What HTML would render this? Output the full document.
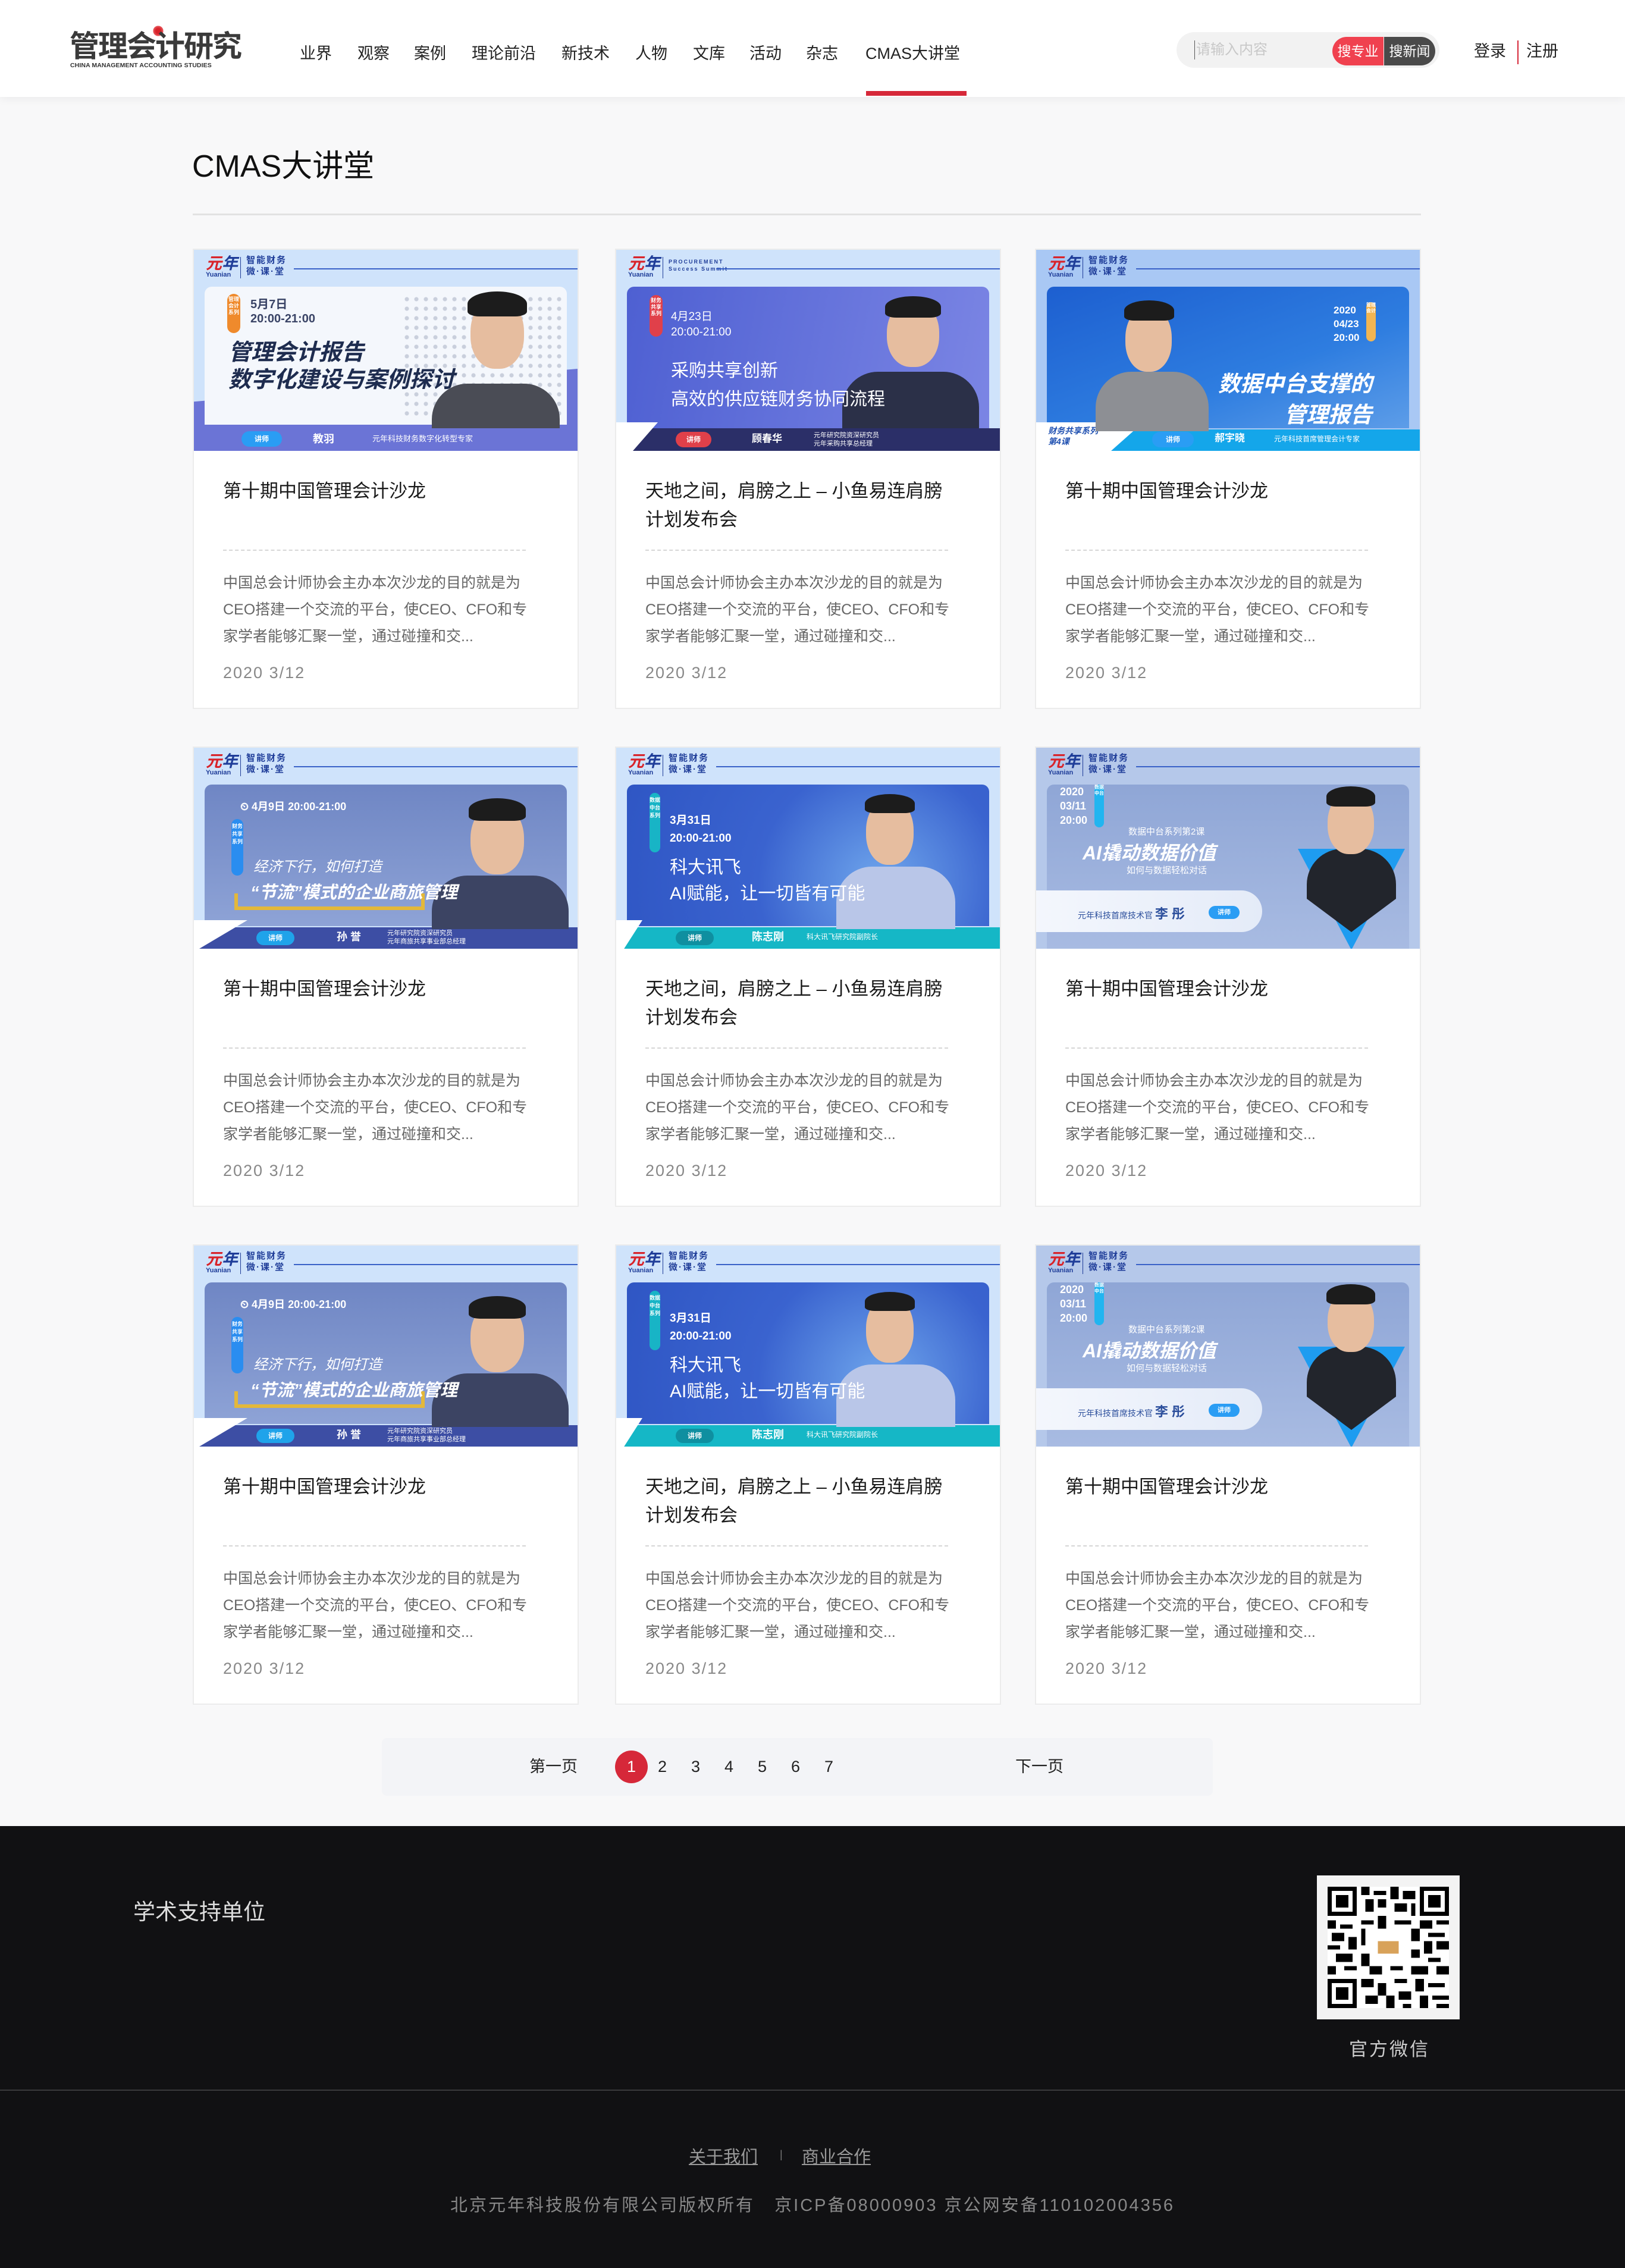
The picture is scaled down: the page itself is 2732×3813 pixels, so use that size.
<!DOCTYPE html>
<html><head><meta charset="utf-8">
<style>
*{margin:0;padding:0;box-sizing:border-box}
body{width:2732px;height:3813px;background:#f8f8f9;font-family:"Liberation Sans","Noto Sans CJK SC",sans-serif;position:relative;overflow:hidden;color:#222}
.abs{position:absolute}
.tx{z-index:3}
#hdr{position:absolute;left:0;top:0;width:2732px;height:163px;background:#fff;box-shadow:0 4px 14px rgba(0,0,0,.05)}
.nav{position:absolute;top:70px;font-size:27px;color:#222;line-height:40px}
.card{position:absolute;width:649px;height:774px;background:#fff;border:2px solid #ececec}
.ct{position:absolute;left:49px;top:382px;width:520px;font-size:31px;line-height:48px;color:#1a1a1a}
.cl{position:absolute;left:49px;top:504px;width:509px;border-top:2px dashed #d6d6d6}
.cd{position:absolute;left:49px;top:538px;width:530px;font-size:25px;line-height:45px;color:#666}
.cdt{position:absolute;left:49px;top:696px;font-size:27px;color:#888;letter-spacing:2px}
.bn{position:absolute;left:0;top:0;width:645px;height:338px;overflow:hidden}
.tp{position:absolute;left:0;top:0;width:100%;height:60px}
.yl{position:absolute;left:20px;top:8px;font-size:27px;font-weight:bold;color:#1f3d99;font-style:italic;line-height:30px}
.yl i{color:#d8232a;font-style:italic}
.ys{position:absolute;left:20px;top:36px;font-size:11px;color:#1f3d99;font-weight:bold}
.yd{position:absolute;left:78px;top:12px;height:36px;border-left:1px solid #1f3d99}
.yz{position:absolute;left:88px;top:8px;font-size:15px;line-height:19px;font-weight:bold;color:#1f3d99;letter-spacing:2px}
.yline{position:absolute;left:168px;top:31px;right:0;border-top:2px solid #3a62c8}
.pn{position:absolute;left:18px;top:62px;right:18px;bottom:38px;border-radius:12px 12px 0 0}
.bar{position:absolute;left:0;bottom:0;width:100%;height:40px}
.hl{position:absolute;font-weight:bold;font-style:italic;color:#fff;z-index:3}
.head{position:absolute;border-radius:48% 48% 45% 45%;background:#e6bd9f}
.hair{position:absolute;border-radius:50% 50% 20% 20%;background:#1c1c1c}
.body{position:absolute;border-radius:60px 60px 0 0}
.tag{position:absolute;border-radius:14px;font-size:14px;color:#fff;font-weight:bold;text-align:center;line-height:28px}
.bt{position:absolute;font-size:13px;color:#fff;line-height:40px;font-weight:bold}
.pg{position:absolute;top:2922px;font-size:27px;line-height:97px;color:#222}
</style></head><body>

<div id="hdr">
  <div class="abs" style="left:256px;top:42px;width:20px;height:20px;background:radial-gradient(circle,#d8232a 30%,#e85a5f 60%,transparent 62%);transform:rotate(45deg)"></div>
  <div class="abs" style="left:117px;top:50px;font-size:50px;font-weight:bold;color:#3a3a3a;letter-spacing:-2px;line-height:56px">管理会计研究</div>
  <div class="abs" style="left:118px;top:104px;font-size:10.5px;font-weight:bold;color:#333;letter-spacing:0.1px">CHINA MANAGEMENT ACCOUNTING STUDIES</div>
  <div class="nav" style="left:504px">业界</div>
  <div class="nav" style="left:601px">观察</div>
  <div class="nav" style="left:696px">案例</div>
  <div class="nav" style="left:793px">理论前沿</div>
  <div class="nav" style="left:944px">新技术</div>
  <div class="nav" style="left:1068px">人物</div>
  <div class="nav" style="left:1165px">文库</div>
  <div class="nav" style="left:1260px">活动</div>
  <div class="nav" style="left:1355px">杂志</div>
  <div class="nav" style="left:1455px">CMAS大讲堂</div>
  <div class="abs" style="left:1456px;top:153px;width:169px;height:8px;background:#d62839"></div>
  <div class="abs" style="left:1978px;top:54px;width:442px;height:60px;border-radius:30px;background:#f2f2f2"></div>
  <div class="abs" style="left:2008px;top:68px;font-size:24px;color:#c8c8c8;line-height:32px;border-left:1px solid #555;padding-left:2px">请输入内容</div>
  <div class="abs" style="left:2240px;top:62px;width:86px;height:48px;border-radius:24px 0 0 24px;background:#f0414f;color:#fff;font-size:23px;line-height:48px;text-align:center">搜专业</div>
  <div class="abs" style="left:2327px;top:62px;width:86px;height:48px;border-radius:0 24px 24px 0;background:#4a4a4a;color:#fff;font-size:23px;line-height:48px;text-align:center">搜新闻</div>
  <div class="abs" style="left:2478px;top:66px;font-size:27px;line-height:40px">登录</div>
  <div class="abs" style="left:2551px;top:68px;height:40px;border-left:2px solid #d62839"></div>
  <div class="abs" style="left:2566px;top:66px;font-size:27px;line-height:40px">注册</div>
</div>

<div class="abs" style="left:323px;top:250px;font-size:52px;line-height:60px;color:#111">CMAS大讲堂</div>
<div class="abs" style="left:324px;top:359px;width:2065px;height:3px;background:#e2e2e2"></div>

<!-- ROW 1 -->
<div class="card" style="left:324px;top:418px">
 <div class="bn" style="background:#cfe3fb">
  <div class="tp"><div class="yl"><i>元</i>年</div><div class="ys">Yuanian</div><div class="yd"></div><div class="yz">智能财务<br>微·课·堂</div><div class="yline"></div></div>
  <div class="abs" style="left:0;top:200px;width:645px;height:138px;background:#6b74d6;clip-path:polygon(0 40%,100% 0,100% 100%,0 100%)"></div>
  <div class="pn" style="background:#f4f7fc;left:18px;right:18px;bottom:44px"></div>
  <div class="abs" style="left:350px;top:75px;width:270px;height:210px;background:radial-gradient(circle,#c9cfdc 3px,transparent 4px) 0 0/16px 16px"></div>
  <div class="tag" style="left:56px;top:74px;width:22px;height:66px;background:#ef8a2c;font-size:9px;line-height:11px;padding-top:4px">管理会计系列</div>
  <div class="abs" style="left:95px;top:80px;font-size:20px;font-weight:bold;color:#3a4466;line-height:24px">5月7日<br>20:00-21:00</div>
  <div class="body" style="left:400px;top:225px;width:215px;height:80px;background:#4a4c55"></div>
  <div class="head" style="left:465px;top:80px;width:90px;height:120px"></div>
  <div class="hair" style="left:460px;top:70px;width:100px;height:42px"></div>
  <div class="hl" style="left:58px;top:150px;font-size:38px;color:#1e2c4f;line-height:46px">管理会计报告<br>数字化建设与案例探讨</div>
  <div class="bar" style="background:#6b74d6;height:38px"></div>
  <div class="tag" style="left:80px;top:305px;width:68px;height:26px;line-height:26px;background:#2a9df4;font-size:12px">讲师</div>
  <div class="bt" style="left:200px;top:298px;font-size:18px">教羽</div>
  <div class="bt" style="left:300px;top:298px;font-weight:normal">元年科技财务数字化转型专家</div>
 </div>
 <div class="ct">第十期中国管理会计沙龙</div><div class="cl"></div>
 <div class="cd">中国总会计师协会主办本次沙龙的目的就是为CEO搭建一个交流的平台，使CEO、CFO和专家学者能够汇聚一堂，通过碰撞和交...</div>
 <div class="cdt">2020 3/12</div>
</div>

<div class="card" style="left:1034px;top:418px">
 <div class="bn" style="background:#cfe3fb">
  <div class="tp"><div class="yl"><i>元</i>年</div><div class="ys">Yuanian</div><div class="yd"></div><div class="yz" style="font-size:9px;line-height:12px;top:14px">PROCUREMENT<br>Success Summit</div><div class="yline"></div></div>
  <div class="pn" style="background:linear-gradient(100deg,#4e60d2,#7b85e4)"></div>
  <div class="abs" style="left:0;top:300px;width:645px;height:38px;background:#2b2f68"></div>
  <div class="abs" style="left:0;top:290px;width:70px;height:48px;background:#fff;clip-path:polygon(0 0,100% 0,40% 100%,0 100%)"></div>
  <div class="tag" style="left:56px;top:76px;width:22px;height:70px;background:#e0404a;font-size:9px;line-height:11px;padding-top:4px">财务共享系列</div>
  <div class="abs" style="left:92px;top:100px;font-size:19px;color:#fff;line-height:26px">4月23日<br>20:00-21:00</div>
  <div class="body" style="left:380px;top:205px;width:230px;height:95px;background:#2b3048"></div>
  <div class="head" style="left:455px;top:85px;width:88px;height:112px"></div>
  <div class="hair" style="left:452px;top:78px;width:94px;height:36px"></div>
  <div class="abs tx" style="left:92px;top:180px;font-size:30px;color:#fff;line-height:48px">采购共享创新<br>高效的供应链财务协同流程</div>
  <div class="tag" style="left:100px;top:306px;width:60px;height:26px;line-height:26px;background:#e0404a;font-size:12px">讲师</div>
  <div class="bt" style="left:228px;top:298px;font-size:17px">顾春华</div>
  <div class="bt" style="left:332px;top:299px;font-size:11px;line-height:14px;font-weight:normal;padding-top:6px">元年研究院资深研究员<br>元年采购共享总经理</div>
 </div>
 <div class="ct">天地之间，肩膀之上 – 小鱼易连肩膀计划发布会</div><div class="cl"></div>
 <div class="cd">中国总会计师协会主办本次沙龙的目的就是为CEO搭建一个交流的平台，使CEO、CFO和专家学者能够汇聚一堂，通过碰撞和交...</div>
 <div class="cdt">2020 3/12</div>
</div>

<div class="card" style="left:1740px;top:418px">
 <div class="bn" style="background:#a9c8f4">
  <div class="tp"><div class="yl"><i>元</i>年</div><div class="ys">Yuanian</div><div class="yd"></div><div class="yz">智能财务<br>微·课·堂</div><div class="yline"></div></div>
  <div class="pn" style="background:linear-gradient(160deg,#1d5fd0,#2e7de0 60%,#5d9de8)"></div>
  <div class="abs" style="left:0;top:302px;width:645px;height:36px;background:#14a6ea"></div>
  <div class="abs" style="left:0;top:290px;width:180px;height:48px;background:#fff;clip-path:polygon(0 0,100% 0,70% 100%,0 100%)"></div>
  <div class="abs" style="left:20px;top:295px;font-size:14px;font-style:italic;font-weight:bold;color:#1e4fb0;line-height:18px">财务共享系列<br>第4课</div>
  <div class="abs" style="left:500px;top:90px;font-size:17px;font-weight:bold;color:#fff;line-height:23px">2020<br>04/23<br>20:00</div>
  <div class="tag" style="left:555px;top:88px;width:16px;height:66px;background:#f2b552;font-size:8px;line-height:10px">管理会计</div>
  <div class="body" style="left:100px;top:205px;width:190px;height:100px;background:#8d8f94"></div>
  <div class="head" style="left:150px;top:95px;width:78px;height:110px"></div>
  <div class="hair" style="left:148px;top:85px;width:84px;height:34px"></div>
  <div class="hl" style="left:300px;top:200px;font-size:37px;line-height:52px;text-align:right;width:265px">数据中台支撑的<br>管理报告</div>
  <div class="tag" style="left:195px;top:306px;width:70px;height:26px;line-height:26px;background:#2a9df4;font-size:12px">讲师</div>
  <div class="bt" style="left:300px;top:297px;font-size:17px">郝宇晓</div>
  <div class="bt" style="left:400px;top:298px;font-weight:normal;font-size:12px">元年科技首席管理会计专家</div>
 </div>
 <div class="ct">第十期中国管理会计沙龙</div><div class="cl"></div>
 <div class="cd">中国总会计师协会主办本次沙龙的目的就是为CEO搭建一个交流的平台，使CEO、CFO和专家学者能够汇聚一堂，通过碰撞和交...</div>
 <div class="cdt">2020 3/12</div>
</div>

<!-- ROW 2 -->
<div class="card" style="left:324px;top:1255px">
 <div class="bn" style="background:#cfe3fb">
  <div class="tp"><div class="yl"><i>元</i>年</div><div class="ys">Yuanian</div><div class="yd"></div><div class="yz">智能财务<br>微·课·堂</div><div class="yline"></div></div>
  <div class="pn" style="background:linear-gradient(180deg,#6f86c4,#8ea3d6)"></div>
  <div class="abs" style="left:0;top:302px;width:645px;height:36px;background:#3d4ea4"></div>
  <div class="abs" style="left:0;top:290px;width:90px;height:48px;background:#fff;clip-path:polygon(0 0,100% 0,10% 100%,0 100%)"></div>
  <div class="abs" style="left:78px;top:85px;font-size:18px;font-weight:bold;color:#fff">⏲ 4月9日 20:00-21:00</div>
  <div class="tag" style="left:63px;top:120px;width:20px;height:95px;background:#2a8df0;font-size:9px;line-height:13px;padding-top:6px">财务共享系列</div>
  <div class="abs" style="left:68px;top:245px;width:320px;height:28px;border:6px solid #e3b83a;border-top:none"></div>
  <div class="body" style="left:400px;top:215px;width:230px;height:90px;background:#3c4463"></div>
  <div class="head" style="left:465px;top:95px;width:90px;height:118px"></div>
  <div class="hair" style="left:462px;top:85px;width:96px;height:38px"></div>
  <div class="abs tx" style="left:100px;top:180px;font-size:24px;font-style:italic;color:#fff">经济下行，如何打造</div>
  <div class="hl" style="left:95px;top:220px;font-size:29px">“节流”模式的企业商旅管理</div>
  <div class="tag" style="left:105px;top:308px;width:64px;height:24px;line-height:24px;background:#1fa3ea;font-size:12px">讲师</div>
  <div class="bt" style="left:240px;top:298px;font-size:18px">孙 誉</div>
  <div class="bt" style="left:325px;top:299px;font-size:11px;line-height:14px;font-weight:normal;padding-top:6px">元年研究院资深研究员<br>元年商旅共享事业部总经理</div>
 </div>
 <div class="ct">第十期中国管理会计沙龙</div><div class="cl"></div>
 <div class="cd">中国总会计师协会主办本次沙龙的目的就是为CEO搭建一个交流的平台，使CEO、CFO和专家学者能够汇聚一堂，通过碰撞和交...</div>
 <div class="cdt">2020 3/12</div>
</div>

<div class="card" style="left:1034px;top:1255px">
 <div class="bn" style="background:#cfe3fb">
  <div class="tp"><div class="yl"><i>元</i>年</div><div class="ys">Yuanian</div><div class="yd"></div><div class="yz">智能财务<br>微·课·堂</div><div class="yline"></div></div>
  <div class="pn" style="background:radial-gradient(circle at 70% 70%,#6fa6ec,#3a63cf 45%,#2f56c4)"></div>
  <div class="abs" style="left:0;top:302px;width:645px;height:36px;background:#15b7c6"></div>
  <div class="abs" style="left:0;top:290px;width:44px;height:48px;background:#fff;clip-path:polygon(0 0,100% 0,30% 100%,0 100%)"></div>
  <div class="tag" style="left:56px;top:76px;width:18px;height:100px;background:#18b4c6;font-size:9px;line-height:13px;padding-top:6px">数据中台系列</div>
  <div class="abs" style="left:90px;top:108px;font-size:19px;font-weight:bold;color:#fff;line-height:30px">3月31日<br>20:00-21:00</div>
  <div class="body" style="left:370px;top:200px;width:200px;height:105px;background:#b9c6e8"></div>
  <div class="head" style="left:420px;top:85px;width:80px;height:112px"></div>
  <div class="hair" style="left:418px;top:78px;width:84px;height:32px"></div>
  <div class="abs tx" style="left:90px;top:180px;font-size:30px;color:#fff;line-height:44px">科大讯飞<br>AI赋能，让一切皆有可能</div>
  <div class="tag" style="left:100px;top:308px;width:64px;height:24px;line-height:24px;background:#0f8fa0;font-size:12px">讲师</div>
  <div class="bt" style="left:228px;top:298px;font-size:18px">陈志刚</div>
  <div class="bt" style="left:320px;top:298px;font-weight:normal;font-size:12px">科大讯飞研究院副院长</div>
 </div>
 <div class="ct">天地之间，肩膀之上 – 小鱼易连肩膀计划发布会</div><div class="cl"></div>
 <div class="cd">中国总会计师协会主办本次沙龙的目的就是为CEO搭建一个交流的平台，使CEO、CFO和专家学者能够汇聚一堂，通过碰撞和交...</div>
 <div class="cdt">2020 3/12</div>
</div>

<div class="card" style="left:1740px;top:1255px">
 <div class="bn" style="background:#b5c8ea">
  <div class="tp"><div class="yl"><i>元</i>年</div><div class="ys">Yuanian</div><div class="yd"></div><div class="yz">智能财务<br>微·课·堂</div><div class="yline"></div></div>
  <div class="pn" style="background:linear-gradient(180deg,#8fa6d6,#a8bbe2);right:18px;bottom:0"></div>
  <div class="abs" style="left:40px;top:62px;font-size:18px;font-weight:bold;color:#fff;line-height:24px">2020<br>03/11<br>20:00</div>
  <div class="tag" style="left:98px;top:62px;width:16px;height:72px;background:#21b5f0;font-size:8px;line-height:10px">数据中台</div>
  <div class="abs" style="left:155px;top:130px;font-size:15px;color:#fff">数据中台系列第2课</div>
  <div class="hl" style="left:78px;top:152px;font-size:32px">AI撬动数据价值</div>
  <div class="abs" style="left:152px;top:195px;font-size:15px;color:#fff">如何与数据轻松对话</div>
  <div class="abs" style="left:-10px;top:240px;width:390px;height:70px;border-radius:0 36px 36px 0;background:linear-gradient(90deg,#f4f7fd,#e4ebf8)"></div>
  <div class="abs" style="left:70px;top:262px;font-size:14px;color:#2c4f9c">元年科技首席技术官 <b style="font-size:22px">李 彤</b></div>
  <div class="tag" style="left:290px;top:266px;width:52px;height:22px;line-height:22px;background:#2a9df4;font-size:11px">讲师</div>
  <div class="abs" style="left:440px;top:170px;width:180px;height:170px;background:#1e9cf0;clip-path:polygon(0 0,100% 0,50% 100%)"></div>
  <div class="body" style="left:455px;top:170px;width:150px;height:140px;background:#22252c;clip-path:polygon(0 0,100% 0,100% 60%,50% 100%,0 60%)"></div>
  <div class="head" style="left:490px;top:75px;width:78px;height:104px"></div>
  <div class="hair" style="left:488px;top:65px;width:82px;height:34px"></div>
 </div>
 <div class="ct">第十期中国管理会计沙龙</div><div class="cl"></div>
 <div class="cd">中国总会计师协会主办本次沙龙的目的就是为CEO搭建一个交流的平台，使CEO、CFO和专家学者能够汇聚一堂，通过碰撞和交...</div>
 <div class="cdt">2020 3/12</div>
</div>

<!-- ROW 3 -->
<div class="card" style="left:324px;top:2092px">
 <div class="bn" style="background:#cfe3fb">
  <div class="tp"><div class="yl"><i>元</i>年</div><div class="ys">Yuanian</div><div class="yd"></div><div class="yz">智能财务<br>微·课·堂</div><div class="yline"></div></div>
  <div class="pn" style="background:linear-gradient(180deg,#6f86c4,#8ea3d6)"></div>
  <div class="abs" style="left:0;top:302px;width:645px;height:36px;background:#3d4ea4"></div>
  <div class="abs" style="left:0;top:290px;width:90px;height:48px;background:#fff;clip-path:polygon(0 0,100% 0,10% 100%,0 100%)"></div>
  <div class="abs" style="left:78px;top:85px;font-size:18px;font-weight:bold;color:#fff">⏲ 4月9日 20:00-21:00</div>
  <div class="tag" style="left:63px;top:120px;width:20px;height:95px;background:#2a8df0;font-size:9px;line-height:13px;padding-top:6px">财务共享系列</div>
  <div class="abs" style="left:68px;top:245px;width:320px;height:28px;border:6px solid #e3b83a;border-top:none"></div>
  <div class="body" style="left:400px;top:215px;width:230px;height:90px;background:#3c4463"></div>
  <div class="head" style="left:465px;top:95px;width:90px;height:118px"></div>
  <div class="hair" style="left:462px;top:85px;width:96px;height:38px"></div>
  <div class="abs tx" style="left:100px;top:180px;font-size:24px;font-style:italic;color:#fff">经济下行，如何打造</div>
  <div class="hl" style="left:95px;top:220px;font-size:29px">“节流”模式的企业商旅管理</div>
  <div class="tag" style="left:105px;top:308px;width:64px;height:24px;line-height:24px;background:#1fa3ea;font-size:12px">讲师</div>
  <div class="bt" style="left:240px;top:298px;font-size:18px">孙 誉</div>
  <div class="bt" style="left:325px;top:299px;font-size:11px;line-height:14px;font-weight:normal;padding-top:6px">元年研究院资深研究员<br>元年商旅共享事业部总经理</div>
 </div>
 <div class="ct">第十期中国管理会计沙龙</div><div class="cl"></div>
 <div class="cd">中国总会计师协会主办本次沙龙的目的就是为CEO搭建一个交流的平台，使CEO、CFO和专家学者能够汇聚一堂，通过碰撞和交...</div>
 <div class="cdt">2020 3/12</div>
</div>

<div class="card" style="left:1034px;top:2092px">
 <div class="bn" style="background:#cfe3fb">
  <div class="tp"><div class="yl"><i>元</i>年</div><div class="ys">Yuanian</div><div class="yd"></div><div class="yz">智能财务<br>微·课·堂</div><div class="yline"></div></div>
  <div class="pn" style="background:radial-gradient(circle at 70% 70%,#6fa6ec,#3a63cf 45%,#2f56c4)"></div>
  <div class="abs" style="left:0;top:302px;width:645px;height:36px;background:#15b7c6"></div>
  <div class="abs" style="left:0;top:290px;width:44px;height:48px;background:#fff;clip-path:polygon(0 0,100% 0,30% 100%,0 100%)"></div>
  <div class="tag" style="left:56px;top:76px;width:18px;height:100px;background:#18b4c6;font-size:9px;line-height:13px;padding-top:6px">数据中台系列</div>
  <div class="abs" style="left:90px;top:108px;font-size:19px;font-weight:bold;color:#fff;line-height:30px">3月31日<br>20:00-21:00</div>
  <div class="body" style="left:370px;top:200px;width:200px;height:105px;background:#b9c6e8"></div>
  <div class="head" style="left:420px;top:85px;width:80px;height:112px"></div>
  <div class="hair" style="left:418px;top:78px;width:84px;height:32px"></div>
  <div class="abs tx" style="left:90px;top:180px;font-size:30px;color:#fff;line-height:44px">科大讯飞<br>AI赋能，让一切皆有可能</div>
  <div class="tag" style="left:100px;top:308px;width:64px;height:24px;line-height:24px;background:#0f8fa0;font-size:12px">讲师</div>
  <div class="bt" style="left:228px;top:298px;font-size:18px">陈志刚</div>
  <div class="bt" style="left:320px;top:298px;font-weight:normal;font-size:12px">科大讯飞研究院副院长</div>
 </div>
 <div class="ct">天地之间，肩膀之上 – 小鱼易连肩膀计划发布会</div><div class="cl"></div>
 <div class="cd">中国总会计师协会主办本次沙龙的目的就是为CEO搭建一个交流的平台，使CEO、CFO和专家学者能够汇聚一堂，通过碰撞和交...</div>
 <div class="cdt">2020 3/12</div>
</div>

<div class="card" style="left:1740px;top:2092px">
 <div class="bn" style="background:#b5c8ea">
  <div class="tp"><div class="yl"><i>元</i>年</div><div class="ys">Yuanian</div><div class="yd"></div><div class="yz">智能财务<br>微·课·堂</div><div class="yline"></div></div>
  <div class="pn" style="background:linear-gradient(180deg,#8fa6d6,#a8bbe2);right:18px;bottom:0"></div>
  <div class="abs" style="left:40px;top:62px;font-size:18px;font-weight:bold;color:#fff;line-height:24px">2020<br>03/11<br>20:00</div>
  <div class="tag" style="left:98px;top:62px;width:16px;height:72px;background:#21b5f0;font-size:8px;line-height:10px">数据中台</div>
  <div class="abs" style="left:155px;top:130px;font-size:15px;color:#fff">数据中台系列第2课</div>
  <div class="hl" style="left:78px;top:152px;font-size:32px">AI撬动数据价值</div>
  <div class="abs" style="left:152px;top:195px;font-size:15px;color:#fff">如何与数据轻松对话</div>
  <div class="abs" style="left:-10px;top:240px;width:390px;height:70px;border-radius:0 36px 36px 0;background:linear-gradient(90deg,#f4f7fd,#e4ebf8)"></div>
  <div class="abs" style="left:70px;top:262px;font-size:14px;color:#2c4f9c">元年科技首席技术官 <b style="font-size:22px">李 彤</b></div>
  <div class="tag" style="left:290px;top:266px;width:52px;height:22px;line-height:22px;background:#2a9df4;font-size:11px">讲师</div>
  <div class="abs" style="left:440px;top:170px;width:180px;height:170px;background:#1e9cf0;clip-path:polygon(0 0,100% 0,50% 100%)"></div>
  <div class="body" style="left:455px;top:170px;width:150px;height:140px;background:#22252c;clip-path:polygon(0 0,100% 0,100% 60%,50% 100%,0 60%)"></div>
  <div class="head" style="left:490px;top:75px;width:78px;height:104px"></div>
  <div class="hair" style="left:488px;top:65px;width:82px;height:34px"></div>
 </div>
 <div class="ct">第十期中国管理会计沙龙</div><div class="cl"></div>
 <div class="cd">中国总会计师协会主办本次沙龙的目的就是为CEO搭建一个交流的平台，使CEO、CFO和专家学者能够汇聚一堂，通过碰撞和交...</div>
 <div class="cdt">2020 3/12</div>
</div>

<!-- pagination -->
<div class="abs" style="left:642px;top:2922px;width:1397px;height:97px;background:#f3f4f7;border-radius:8px"></div>
<div class="pg" style="left:890px">第一页</div>
<div class="abs" style="left:1034px;top:2943px;width:55px;height:55px;border-radius:50%;background:#d62839;color:#fff;font-size:27px;line-height:55px;text-align:center">1</div>
<div class="pg" style="left:1106px">2</div>
<div class="pg" style="left:1162px">3</div>
<div class="pg" style="left:1218px">4</div>
<div class="pg" style="left:1274px">5</div>
<div class="pg" style="left:1330px">6</div>
<div class="pg" style="left:1386px">7</div>
<div class="pg" style="left:1707px">下一页</div>

<!-- footer -->
<div class="abs" style="left:0;top:3070px;width:2732px;height:743px;background:#111113"></div>
<div class="abs" style="left:224px;top:3184px;font-size:37px;color:#ddd">学术支持单位</div>
<div class="abs" style="left:2214px;top:3153px;width:240px;height:242px;background:#f3f3f3"></div>
<svg class="abs" style="left:2232px;top:3172px" width="204" height="204" viewBox="0 0 29 29" shape-rendering="crispEdges">
<rect width="29" height="29" fill="#fff"/>
<g fill="#000">
<path d="M0 0h7v7H0zM1 1v5h5V1zM2 2h3v3H2z" fill-rule="evenodd"/>
<path d="M22 0h7v7h-7zM23 1v5h5V1zM24 2h3v3h-3z" fill-rule="evenodd"/>
<path d="M0 22h7v7H0zM1 23v5h5v-5zM2 24h3v3H2z" fill-rule="evenodd"/>
<path d="M8 0h2v2H8zM11 1h3v1h-3zM15 0h2v3h-2zM18 1h3v2h-3zM9 3h2v3H9zM12 3h2v2h-2zM16 4h3v2h-3zM20 4h1v3h-1zM8 8h3v1H8zM12 7h2v3h-2zM0 8h2v2H0zM3 9h3v1H3zM16 8h4v1h-4zM22 8h3v2h-3zM26 8h3v1h-3zM1 11h3v2H1zM5 12h2v3H5zM8 10h1v4H8zM20 10h2v3h-2zM24 11h4v1h-4zM0 14h3v1H0zM23 13h2v3h-2zM26 13h3v2h-3zM2 16h4v2H2zM8 16h2v3H8zM20 15h2v2h-2zM24 17h3v1h-3zM0 19h2v2H0zM4 19h3v1H4zM10 19h3v2h-3zM15 19h3v1h-3zM20 19h4v2h-4zM26 19h3v2h-3zM8 22h3v2H8zM12 23h2v3h-2zM16 22h3v1h-3zM21 22h2v3h-2zM24 23h4v1h-4zM9 26h3v2H9zM14 26h2v3h-2zM17 25h3v2h-3zM22 26h2v3h-2zM25 26h4v1h-4zM26 28h3v1h-3zM18 28h2v1h-2z"/>
</g>
<rect x="11" y="11" width="7" height="7" fill="#fff"/><rect x="12" y="13" width="5" height="3" fill="#d8a25a"/>
</svg>
<div class="abs" style="left:2268px;top:3420px;font-size:31px;color:#ccc;letter-spacing:3px">官方微信</div>
<div class="abs" style="left:0;top:3513px;width:2732px;height:2px;background:#3a3a3c"></div>
<div class="abs" style="left:1158px;top:3603px;font-size:29px;color:#999;text-decoration:underline">关于我们</div>
<div class="abs" style="left:1311px;top:3612px;font-size:18px;color:#777">|</div>
<div class="abs" style="left:1348px;top:3603px;font-size:29px;color:#999;text-decoration:underline">商业合作</div>
<div class="abs" style="left:0;top:3684px;width:2732px;text-align:center;font-size:29px;color:#888;letter-spacing:3px">北京元年科技股份有限公司版权所有&nbsp;&nbsp;&nbsp;京ICP备08000903 京公网安备110102004356</div>
</body></html>
